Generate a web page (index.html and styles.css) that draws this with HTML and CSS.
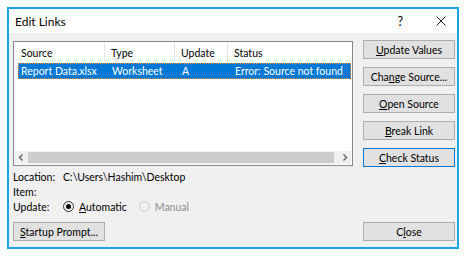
FILE: index.html
```html
<!DOCTYPE html>
<html lang="en">
<head>
    <meta charset="UTF-8">
    <title>Edit Links</title>
    <link rel="stylesheet" href="styles.css">
</head>
<body>
    <div class="window">
        <div class="titlebar">
            <span class="title">Edit Links</span>
            <span class="help">?</span>
            <svg class="close-x" viewBox="0 0 10 10" width="10" height="10">
                <path d="M0.5 0.5 L9.5 9.5 M9.5 0.5 L0.5 9.5" stroke="#222" stroke-width="1" fill="none"></path>
            </svg>
        </div>

        <div class="content">
            <div class="main">
                <div class="list">
                    <div class="list-inner">
                        <div class="row header">
                            <div class="col c-source">Source</div>
                            <div class="col c-type">Type</div>
                            <div class="col c-update">Update</div>
                            <div class="col c-status">Status</div>
                        </div>
                        <div class="row selected">
                            <div class="col c-source">Report Data.xlsx</div>
                            <div class="col c-type">Worksheet</div>
                            <div class="col c-update">A</div>
                            <div class="col c-status">Error: Source not found</div>
                        </div>
                        <div class="spacer"></div>
                        <div class="hscroll">
                            <svg class="arrow" viewBox="0 0 13 13" width="13" height="13">
                                <path d="M7.5 3.5 L4.5 6.5 L7.5 9.5" stroke="#606060" stroke-width="1.4" fill="none"></path>
                            </svg>
                            <span class="thumb"></span>
                            <svg class="arrow" viewBox="0 0 13 13" width="13" height="13">
                                <path d="M5.5 3.5 L8.5 6.5 L5.5 9.5" stroke="#606060" stroke-width="1.4" fill="none"></path>
                            </svg>
                        </div>
                    </div>
                </div>

                <div class="side">
                    <button class="btn"><u>U</u>pdate Values</button>
                    <button class="btn">Cha<u>n</u>ge Source...</button>
                    <button class="btn"><u>O</u>pen Source</button>
                    <button class="btn"><u>B</u>reak Link</button>
                    <button class="btn default"><u>C</u>heck Status</button>
                </div>
            </div>

            <div class="info">
                <div class="info-row"><span class="label">Location:</span><span>C:\Users\Hashim\Desktop</span></div>
                <div class="info-row"><span class="label">Item:</span></div>
                <div class="info-row">
                    <span class="label">Update:</span>
                    <span class="radio checked"></span><span class="radio-text"><u>A</u>utomatic</span>
                    <span class="radio disabled"></span><span class="radio-text muted">Manual</span>
                </div>
            </div>

            <div class="footer">
                <button class="btn"><u>S</u>tartup Prompt...</button>
                <button class="btn">C<u>l</u>ose</button>
            </div>
        </div>
    </div>
</body>
</html>
```

FILE: styles.css
```css
* {
    margin: 0;
    padding: 0;
    box-sizing: border-box;
}

body {
    font-family: 'Lato', 'Noto Sans', sans-serif;
    font-size: 10.5px;
    color: #000;
    background: #fff;
    padding: 7px;
}

.window {
    width: 452px;
    height: 242px;
    border: 2px solid #17a5e6;
    display: flex;
    flex-direction: column;
    background: #f0f0f0;
}

.titlebar {
    height: 24px;
    background: #fff;
    display: flex;
    align-items: center;
    padding-left: 6px;
    font-size: 12px;
}

.title {
    flex: 1;
}

.help {
    margin-right: 33px;
    font-size: 12.5px;
}

.close-x {
    margin-right: 11px;
}

.content {
    flex: 1;
    padding: 7px 2px 6px 4px;
    display: flex;
    flex-direction: column;
}

.main {
    display: flex;
    gap: 10px;
}

.list {
    width: 340px;
    height: 125px;
    margin-top: 1px;
    border: 1px solid #828790;
    background: #fff;
}

.list-inner {
    height: 100%;
    display: flex;
    flex-direction: column;
    padding: 0 1px;
}

.row {
    display: flex;
    align-items: center;
}

.header {
    height: 21px;
}

.header .col {
    border-right: 1px solid #e5e5e5;
    height: 100%;
    display: flex;
    align-items: center;
}

.header .c-status {
    border-right: none;
}

.col {
    padding-left: 6px;
    white-space: nowrap;
}

.c-source { width: 90px; }
.c-type { width: 70px; }
.c-update { width: 53px; }
.c-status { flex: 1; }

.selected {
    height: 16px;
    margin-left: 3px;
    background: #0078d7;
    color: #fff;
    border: 1px dotted #ff8728;
}

.selected .c-source {
    padding-left: 2px;
    width: 87px;
}

.spacer {
    flex: 1;
}

.hscroll {
    height: 13px;
    margin-bottom: 1px;
    display: flex;
    align-items: center;
    background: #f0f0f0;
}

.arrow {
    flex: none;
}

.thumb {
    flex: 1;
    height: 11px;
    background: #cdcdcd;
    margin-right: 4px;
}

.side {
    display: flex;
    flex-direction: column;
    gap: 8px;
}

.btn {
    width: 92px;
    height: 19px;
    background: #e1e1e1;
    border: 1px solid #adadad;
    font-family: inherit;
    font-size: 10.5px;
    color: #000;
}

.btn u {
    text-underline-offset: 1px;
}

.default {
    border-color: #0078d7;
    box-shadow: inset 0 0 0 1px #e1e1e1;
}

.info {
    margin-top: 2px;
    display: flex;
    flex-direction: column;
}

.info-row {
    height: 15px;
    display: flex;
    align-items: center;
}

.label {
    width: 50px;
}

.radio {
    width: 11px;
    height: 11px;
    border-radius: 50%;
    border: 1px solid #333;
    margin-right: 5px;
    position: relative;
}

.radio.checked::after {
    content: '';
    position: absolute;
    left: 2px;
    top: 2px;
    width: 5px;
    height: 5px;
    border-radius: 50%;
    background: #000;
}

.radio.disabled {
    border-color: #ccc;
    margin-left: 12px;
}

.muted {
    color: #8d8d8d;
}

.footer {
    margin-top: auto;
    display: flex;
    justify-content: space-between;
}
```
